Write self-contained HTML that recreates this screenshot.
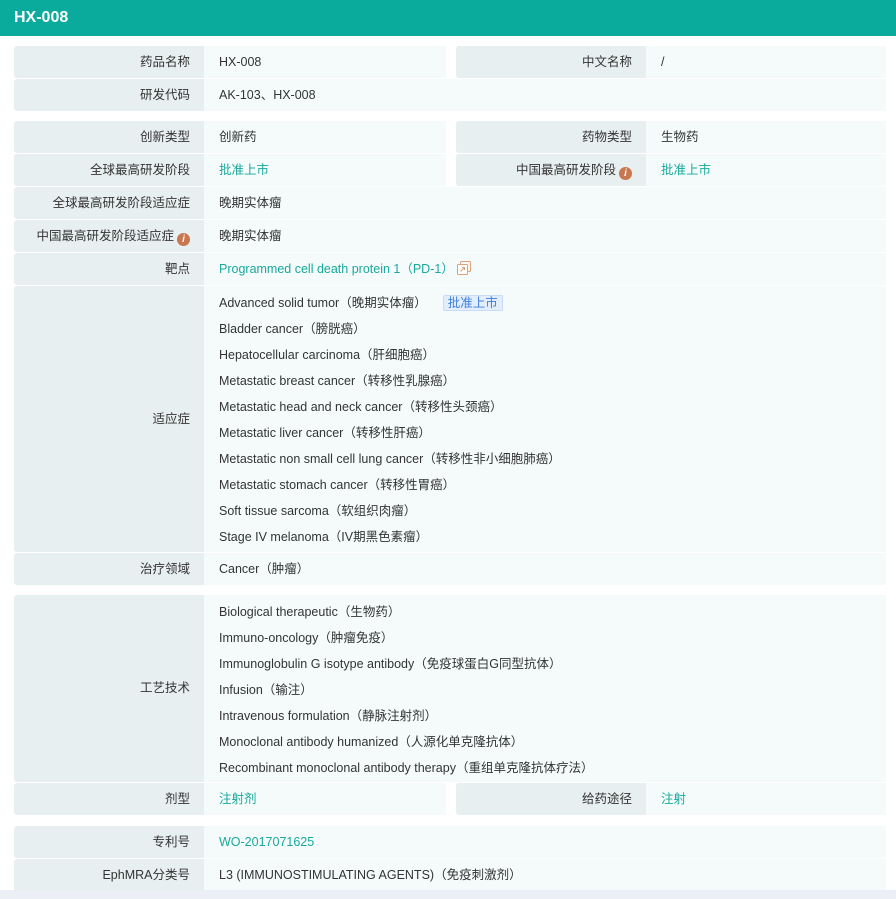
<!DOCTYPE html><html><head><meta charset="utf-8"><style>
body{margin:0;width:896px;height:899px;background:#fff;position:relative;overflow:hidden;font-family:"Liberation Sans","Noto Sans CJK SC",sans-serif;font-size:12.5px;color:#333}
.h{position:absolute;left:0;top:0;width:896px;height:36px;background:#0aab9d;color:#fff;font-weight:bold;font-size:16px;line-height:36px;padding-left:14px;box-sizing:border-box}
.l,.v{position:absolute;box-sizing:border-box}
.l{background:#e8eff0;text-align:right;padding-right:14px;border-radius:3px 0 0 3px}
.v{background:#f5fbfb;padding-left:15px}
.t{color:#17a99b}
.ln{position:absolute;left:219px;white-space:nowrap;line-height:16px;height:16px}
.i{display:inline-block;width:13px;height:13px;border-radius:50%;background:#c9774f;color:#fff;font-size:10px;line-height:13px;text-align:center;font-style:italic;font-weight:bold;vertical-align:-2px;margin-left:3px}
.tag{display:inline-block;background:#e3eefc;color:#3d7fe0;border:1px solid #c8dcf7;padding:0 4px;line-height:14px;margin-left:16px;border-radius:2px}
.bot{position:absolute;left:0;top:890px;width:896px;height:9px;background:#ecf0f6}
</style></head><body>
<div class="h">HX-008</div>
<div id="c"></div>
<div class="bot"></div>
<script>
const c=document.getElementById('c');let h='';
function L(y,hh,txt,x=14,w=190){h+=`<div class="l" style="left:${x}px;top:${y}px;width:${w}px;height:${hh}px;line-height:${hh}px">${txt}</div>`}
function V(y,hh,txt,x=204,w=682){h+=`<div class="v" style="left:${x}px;top:${y}px;width:${w}px;height:${hh}px;line-height:${hh}px">${txt}</div>`}
function half(y,a,b,c2,d){L(y,32,a);V(y,32,b,204,242);L(y,32,c2,456,190);V(y,32,d,646,240);}
half(46,'药品名称','HX-008','中文名称','/');
L(79,32,'研发代码');V(79,32,'AK-103、HX-008');
half(121,'创新类型','创新药','药物类型','生物药');
half(154,'全球最高研发阶段','<span class="t">批准上市</span>','中国最高研发阶段<span class="i">i</span>','<span class="t">批准上市</span>');
L(187,32,'全球最高研发阶段适应症');V(187,32,'晚期实体瘤');
L(220,32,'中国最高研发阶段适应症<span class="i">i</span>');V(220,32,'晚期实体瘤');
L(253,32,'靶点');V(253,32,'<span class="t">Programmed cell death protein 1（PD-1）</span> <svg width="14" height="14" style="vertical-align:-2px"><rect x="3.5" y="0.5" width="10" height="10" rx="1" fill="none" stroke="#e0a07a"/><rect x="0.5" y="3.5" width="10" height="10" rx="1" fill="#fff" stroke="#e0a07a"/><path d="M3.5 10.5l4-4M5 6.5h2.5v2.5" fill="none" stroke="#e0a07a"/></svg>');
L(286,266,'适应症');V(286,266,'');
const ind=['Advanced solid tumor（晚期实体瘤）<span class="tag">批准上市</span>','Bladder cancer（膀胱癌）','Hepatocellular carcinoma（肝细胞癌）','Metastatic breast cancer（转移性乳腺癌）','Metastatic head and neck cancer（转移性头颈癌）','Metastatic liver cancer（转移性肝癌）','Metastatic non small cell lung cancer（转移性非小细胞肺癌）','Metastatic stomach cancer（转移性胃癌）','Soft tissue sarcoma（软组织肉瘤）','Stage IV melanoma（IV期黑色素瘤）'];
ind.forEach((s,i)=>h+=`<div class="ln" style="top:${295+i*26}px">${s}</div>`);
L(553,32,'治疗领域');V(553,32,'Cancer（肿瘤）');
L(595,187,'工艺技术');V(595,187,'');
const tech=['Biological therapeutic（生物药）','Immuno-oncology（肿瘤免疫）','Immunoglobulin G isotype antibody（免疫球蛋白G同型抗体）','Infusion（输注）','Intravenous formulation（静脉注射剂）','Monoclonal antibody humanized（人源化单克隆抗体）','Recombinant monoclonal antibody therapy（重组单克隆抗体疗法）'];
tech.forEach((s,i)=>h+=`<div class="ln" style="top:${604+i*26}px">${s}</div>`);
half(783,'剂型','<span class="t">注射剂</span>','给药途径','<span class="t">注射</span>');
L(826,32,'专利号');V(826,32,'<span class="t">WO-2017071625</span>');
L(859,32,'EphMRA分类号');V(859,32,'L3 (IMMUNOSTIMULATING AGENTS)（免疫刺激剂）');
c.innerHTML=h;
</script>
</body></html>
